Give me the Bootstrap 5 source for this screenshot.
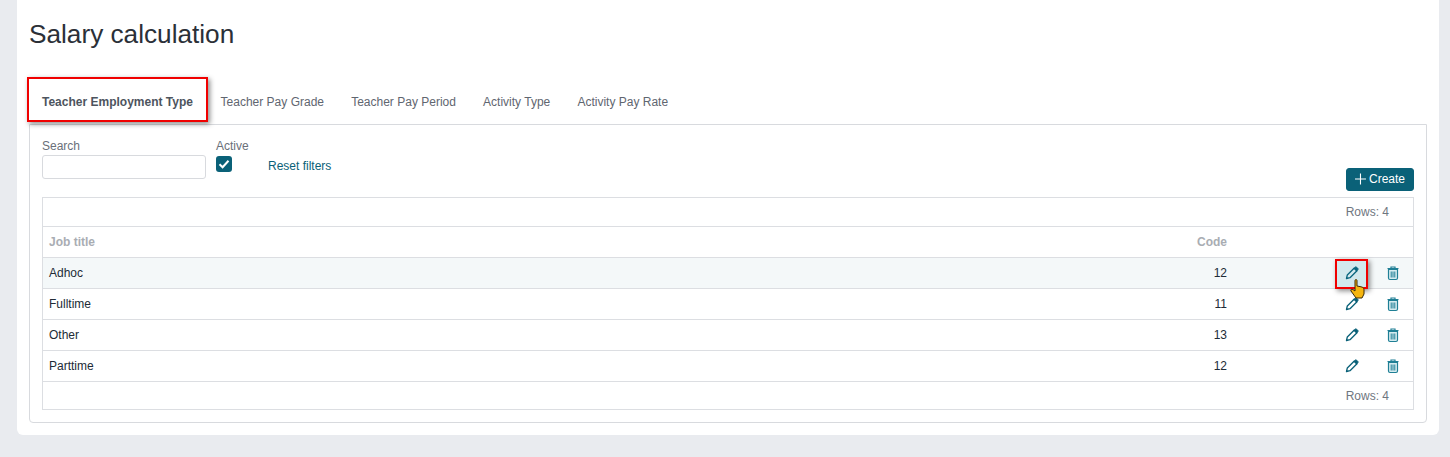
<!DOCTYPE html>
<html lang="en">
<head>
    <meta charset="UTF-8">
    <title>Salary calculation</title>
    <link href="https://cdn.jsdelivr.net/npm/bootstrap@5.3.0/dist/css/bootstrap.min.css" rel="stylesheet">
    <style>
        body {
            background: #e9ebef;
            font-family: "Liberation Sans", Arial, sans-serif;
            font-size: 12px;
            color: #212b36;
            height: 457px;
            overflow: hidden;
        }

        .sheet {
            margin: 0 11px 0 17px;
            height: 435px;
            background: #fff;
            border-radius: 0 0 6px 6px;
            padding: 0 12px 12px;
        }

        .page-title {
            font-size: 26.2px;
            font-weight: 400;
            line-height: 34px;
            margin: 0;
            padding-top: 17px;
            height: 77px;
            color: #2b3038;
        }

        .tab-bar {
            height: 47px;
        }

        .tab-item {
            padding: 0 13.6px;
            line-height: 50px;
            color: #5f6670;
            white-space: nowrap;
            text-decoration: none;
        }

        .tab-item.on {
            font-weight: 700;
            color: #4d545e;
            width: 178px;
            padding-left: 13px;
            padding-right: 0;
        }

        .tab-wrap {
            position: relative;
        }

        .mark-box {
            position: absolute;
            border: 2px solid #f00000;
            box-shadow: 2px 2px 5px rgba(0, 0, 0, .45);
            pointer-events: none;
        }

        .tab-wrap .mark-box {
            left: -2px;
            top: 0;
            width: 181px;
            height: 45px;
        }

        .pane {
            height: 299px;
            border: 1px solid #d8dade;
            border-radius: 0 0 4px 4px;
            padding: 14px 12px 12px;
        }

        .filters {
            height: 58px;
        }

        .filter-label {
            display: block;
            line-height: 14px;
            color: #6a7079;
            margin-bottom: 2px;
        }

        .search-box {
            width: 164px;
            height: 24px;
            border: 1px solid #d8dade;
            border-radius: 3px;
            display: block;
        }

        .active-col {
            margin-left: 10px;
            width: 52px;
        }

        .check-box {
            width: 16px;
            height: 16px;
            margin-top: 3px;
            background: #0a6178;
            border-radius: 3px;
            display: flex;
            align-items: center;
            justify-content: center;
        }

        .reset-link {
            color: #0a6178;
            text-decoration: none;
            margin-top: 20px;
            line-height: 14px;
        }

        .create-btn {
            --bs-btn-bg: #0a6178;
            --bs-btn-border-color: #0a6178;
            --bs-btn-color: #fff;
            --bs-btn-font-size: 12px;
            --bs-btn-padding-x: 8px;
            --bs-btn-padding-y: 0;
            --bs-btn-border-radius: 3px;
            height: 23px;
            margin-top: 29px;
            line-height: 21px;
            display: flex;
            align-items: center;
            gap: 3px;
            width: 68px;
        }

        .create-btn svg {
            margin-top: -2px;
        }

        .grid-box {
            border: 1px solid #dcdee2;
            height: 213px;
        }

        .grid-row {
            height: 31px;
            border-bottom: 1px solid #dcdee2;
            padding: 0 6px;
            align-items: center;
            position: relative;
        }

        .grid-row.hover {
            background: #f4f8f9;
        }

        .grid-row.count {
            height: 29px;
            justify-content: flex-end;
            color: #6f7680;
            padding-right: 24px;
        }

        .grid-row.last {
            border-bottom: 0;
            height: 27px;
        }

        .grid-row.head {
            font-weight: 700;
            color: #a9adb3;
        }

        .cell-name {
            flex: 1;
        }

        .cell-code {
            width: 60px;
            text-align: right;
            margin-right: 109px;
        }

        .cell-acts {
            width: 71px;
            display: flex;
            align-items: center;
            gap: 25px;
            padding-left: 8px;
            flex: none;
        }

        .cell-acts svg {
            display: block;
        }

        .edit-mark {
            left: -9px;
            top: -6px;
            width: 33px;
            height: 30px;
            background: rgba(10, 140, 170, .14);
        }

        .acts-wrap {
            position: relative;
            display: flex;
        }

        .acts-wrap .hand {
            position: absolute;
            left: 6px;
            top: 14px;
            z-index: 2;
        }
    </style>
</head>
<body>

    <div class="sheet">
        <h1 class="page-title">Salary calculation</h1>

        <div class="tab-wrap">
            <div class="tab-bar d-flex">
                <a class="tab-item on" href="#">Teacher Employment Type</a>
                <a class="tab-item" href="#">Teacher Pay Grade</a>
                <a class="tab-item" href="#">Teacher Pay Period</a>
                <a class="tab-item" href="#">Activity Type</a>
                <a class="tab-item" href="#">Activity Pay Rate</a>
            </div>
            <div class="mark-box"></div>
        </div>

        <div class="pane">
            <div class="filters d-flex">
                <div>
                    <label class="filter-label" for="search">Search</label>
                    <input class="search-box" id="search" type="text">
                </div>
                <div class="active-col">
                    <span class="filter-label">Active</span>
                    <span class="check-box">
                        <svg width="12" height="12" viewBox="0 0 12 12"><path d="M1.500 6.200 4.600 9.200 10.500 2.800" fill="none" stroke="#fff" stroke-width="2"/></svg>
                    </span>
                </div>
                <a class="reset-link" href="#">Reset filters</a>
                <div class="ms-auto">
                    <button class="btn create-btn" type="button">
                        <svg width="12" height="12" viewBox="0 0 12 12"><path d="M6 0v12M0 6h12" stroke="#fff" stroke-width="1.2"/></svg>
                        Create
                    </button>
                </div>
            </div>

            <div class="grid-box">
                <div class="grid-row count d-flex">Rows: 4</div>
                <div class="grid-row head d-flex">
                    <div class="cell-name">Job title</div>
                    <div class="cell-code">Code</div>
                    <div class="cell-acts"></div>
                </div>
                <div class="grid-row hover d-flex">
                    <div class="cell-name">Adhoc</div>
                    <div class="cell-code">12</div>
                    <div class="cell-acts">
                        <div class="acts-wrap">
                            <div class="mark-box edit-mark"></div>
                            <svg width="16" height="16" viewBox="0 0 16 16"><use href="#ico-pen"/></svg>
                            <svg class="hand" width="16" height="22" viewBox="0 0 16 22"><path d="M5 1.500c0-1.200 2-1.200 2 0V7l4 .8c2 .4 3 1.400 3 3V15l-2 4H6L1 12c-.8-1.300.8-2.500 2-1.400L5 12z" fill="#f5b50e" stroke="#3b2a05" stroke-width="1"/></svg>
                        </div>
                        <svg width="16" height="16" viewBox="0 0 16 16"><use href="#ico-bin"/></svg>
                    </div>
                </div>
                <div class="grid-row d-flex">
                    <div class="cell-name">Fulltime</div>
                    <div class="cell-code">11</div>
                    <div class="cell-acts">
                        <svg width="16" height="16" viewBox="0 0 16 16"><use href="#ico-pen"/></svg>
                        <svg width="16" height="16" viewBox="0 0 16 16"><use href="#ico-bin"/></svg>
                    </div>
                </div>
                <div class="grid-row d-flex">
                    <div class="cell-name">Other</div>
                    <div class="cell-code">13</div>
                    <div class="cell-acts">
                        <svg width="16" height="16" viewBox="0 0 16 16"><use href="#ico-pen"/></svg>
                        <svg width="16" height="16" viewBox="0 0 16 16"><use href="#ico-bin"/></svg>
                    </div>
                </div>
                <div class="grid-row d-flex">
                    <div class="cell-name">Parttime</div>
                    <div class="cell-code">12</div>
                    <div class="cell-acts">
                        <svg width="16" height="16" viewBox="0 0 16 16"><use href="#ico-pen"/></svg>
                        <svg width="16" height="16" viewBox="0 0 16 16"><use href="#ico-bin"/></svg>
                    </div>
                </div>
                <div class="grid-row count last d-flex">Rows: 4</div>
            </div>
        </div>
    </div>

    <svg width="0" height="0" class="d-none">
        <symbol id="ico-pen" viewBox="0 0 16 16">
            <path d="M2.500 13.500 3.300 10 10.300 3 13 5.700 6 12.700z" fill="none" stroke="#0a6178" stroke-width="1.300" stroke-linejoin="round"/>
            <path d="M9.800 3.500 12 1.500 14.500 4 12.600 6.300z" fill="#0a6178" stroke="#0a6178" stroke-width=".6"/>
        </symbol>
        <symbol id="ico-bin" viewBox="0 0 16 16">
            <path d="M3.500 4.500h9V13c0 .9-.6 1.500-1.500 1.500H5c-.9 0-1.500-.6-1.500-1.500z" fill="#d6ecf0" stroke="#1f7f95" stroke-width="1.200"/>
            <path d="M2.500 3.500h11M6 3.300V2h4v1.300" fill="none" stroke="#1f7f95" stroke-width="1.200"/>
            <path d="M6.200 6.500v6M8 6.500v6M9.800 6.500v6" stroke="#1f7f95"/>
        </symbol>
    </svg>

    <script src="https://cdn.jsdelivr.net/npm/bootstrap@5.3.0/dist/js/bootstrap.bundle.min.js"></script>
</body>
</html>
